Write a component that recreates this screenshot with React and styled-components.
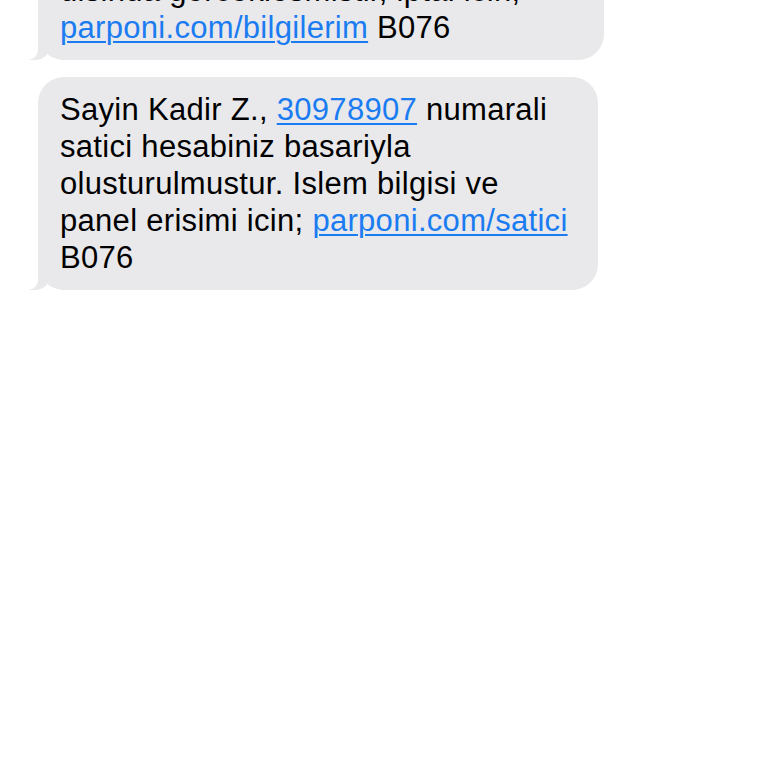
import React from 'react';
import styled, { createGlobalStyle } from 'styled-components';

const Global = createGlobalStyle`
  html, body {
    margin: 0;
    padding: 0;
    background: #ffffff;
  }
  body {
    font-family: "Liberation Sans", Arial, sans-serif;
    -webkit-font-smoothing: antialiased;
  }
`

const Thread = styled.div`
  display: flex;
  flex-direction: column;
  align-items: flex-start;
  gap: 17px;
  padding-left: 38px;
  margin-top: -79px;
  height: 847px;
  overflow: hidden;
`

const Bubble = styled.div`
  position: relative;
  box-sizing: border-box;
  width: ${p => p.w}px;
  padding: 14px 20px 14px 22px;
  background: #e9e9eb;
  border-radius: 26px;
  color: #000;
  font-size: 31px;
  line-height: 37px;
  letter-spacing: 0.3px;
  white-space: nowrap;

  &::before {
    content: "";
    position: absolute;
    bottom: 0;
    left: -9px;
    width: 22px;
    height: 22px;
    background: #e9e9eb;
    border-bottom-right-radius: 16px;
  }
  &::after {
    content: "";
    position: absolute;
    bottom: 0;
    left: -13px;
    width: 13px;
    height: 22px;
    background: #ffffff;
    border-bottom-right-radius: 10px;
  }
`

const Text = styled.span`
  position: relative;
  z-index: 1;
`

const Link = styled.a`
  color: #1b7cf2;
  text-decoration: underline;
  text-decoration-thickness: 2px;
  text-underline-offset: 3px;
`

export default function App() {
  return (
    <>
      <Global />
      <Thread>
        <Bubble w={566}>
          <Text>
            hesabinizdaki degisiklik bilginiz<br />
            disinda gerceklesmistir, iptal icin;<br />
            <Link>parponi.com/bilgilerim</Link> B076
          </Text>
        </Bubble>
        <Bubble w={560}>
          <Text>
            Sayin Kadir Z., <Link>30978907</Link> numarali<br />
            satici hesabiniz basariyla<br />
            olusturulmustur. Islem bilgisi ve<br />
            panel erisimi icin; <Link>parponi.com/satici</Link><br />
            B076
          </Text>
        </Bubble>
      </Thread>
    </>
  )
}
